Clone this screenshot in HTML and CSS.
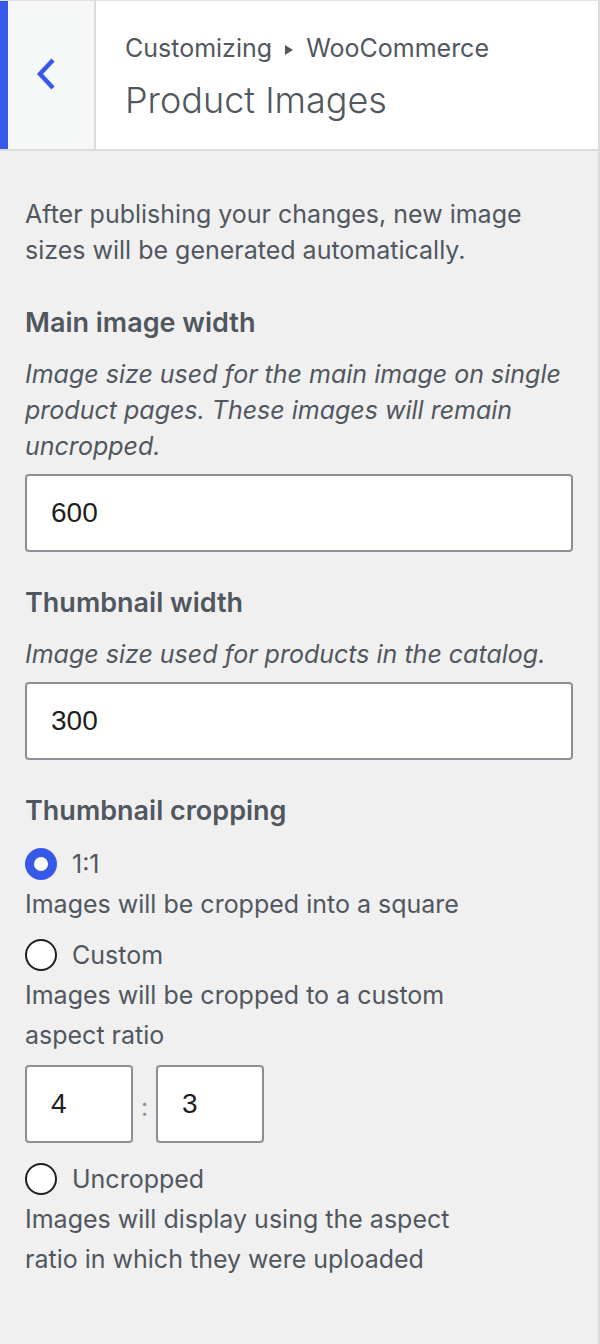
FILE: index.html
```html
<!DOCTYPE html>
<html lang="en">
<head>
    <meta charset="UTF-8">
    <meta name="viewport" content="width=device-width, initial-scale=1.0">
    <title>Product Images</title>
    <link rel="stylesheet" href="styles.css">
</head>
<body>
    <div class="panel">
        <div class="section-header">
            <button class="back-btn" aria-label="Back">
                <svg width="20" height="32" viewBox="0 0 20 32">
                    <path d="M17 2 L4 16 L17 30" fill="none" stroke="#3858e9" stroke-width="4.5"/>
                </svg>
            </button>
            <div class="section-title">
                <span class="breadcrumb">Customizing
                    <svg class="crumb-arrow" width="8" height="10" viewBox="0 0 8 10"><path d="M0 0 L8 5 L0 10 Z" fill="#50575e"/></svg>
                    WooCommerce</span>
                <h2>Product Images</h2>
            </div>
        </div>

        <div class="controls">
            <p class="intro">After publishing your changes, new image sizes will be generated automatically.</p>

            <div class="control">
                <span class="control-title">Main image width</span>
                <span class="description">Image size used for the main image on single product pages. These images will remain uncropped.</span>
                <input type="text" class="text-input" value="600">
            </div>

            <div class="control">
                <span class="control-title">Thumbnail width</span>
                <span class="description">Image size used for products in the catalog.</span>
                <input type="text" class="text-input" value="300">
            </div>

            <div class="control">
                <span class="control-title">Thumbnail cropping</span>
                <ul class="radio-list">
                    <li>
                        <label class="radio-row"><input type="radio" name="crop" checked> 1:1</label>
                        <p class="radio-desc">Images will be cropped into a square</p>
                    </li>
                    <li>
                        <label class="radio-row"><input type="radio" name="crop"> Custom</label>
                        <p class="radio-desc">Images will be cropped to a custom<br>aspect ratio</p>
                        <div class="ratio">
                            <input type="text" class="ratio-input" value="4">
                            <span class="ratio-sep">:</span>
                            <input type="text" class="ratio-input" value="3">
                        </div>
                    </li>
                    <li>
                        <label class="radio-row"><input type="radio" name="crop"> Uncropped</label>
                        <p class="radio-desc">Images will display using the aspect<br>ratio in which they were uploaded</p>
                    </li>
                </ul>
            </div>
        </div>
    </div>
</body>
</html>
```

FILE: styles.css
```css
body {
    font-family: Inter, "Noto Sans", sans-serif;
    margin: 0;
    padding: 0;
    background-color: #f0f0f1;
    color: #50575e;
}
.panel {
    min-height: 100vh;
    box-sizing: border-box;
    border-top: 1px solid #e0e0e0;
    border-right: 2px solid #dcdcde;
}
.section-header {
    display: flex;
    height: 148px;
    background-color: #fff;
    border-bottom: 2px solid #dcdcde;
}
.back-btn {
    width: 96px;
    flex-shrink: 0;
    margin: 0;
    border: 0;
    border-left: 8px solid #3858e9;
    border-right: 2px solid #dcdcde;
    background-color: #f6f7f7;
    display: flex;
    align-items: center;
    justify-content: flex-start;
    padding: 0 0 0 28px;
    box-sizing: border-box;
}
.back-btn svg {
    display: block;
    margin-bottom: 2px;
}
.section-title {
    padding: 28px 0 0 29px;
}
.breadcrumb {
    display: block;
    font-size: 25px;
    line-height: 38px;
}
.crumb-arrow {
    margin: 0 6px 2px 6px;
}
.section-title h2 {
    margin: 6px 0 0 0;
    font-size: 36px;
    font-weight: 300;
    line-height: 54px;
}
.controls {
    padding: 45px 25px 40px 25px;
}
.intro {
    margin: 0 0 37px 0;
    font-size: 25px;
    line-height: 36px;
}
.control {
    margin-bottom: 33px;
}
.control-title {
    display: block;
    font-size: 27px;
    font-weight: 600;
    line-height: 36px;
    margin-bottom: 15px;
}
.description {
    display: block;
    font-style: italic;
    font-size: 25px;
    line-height: 36px;
    margin-bottom: 10px;
}
.text-input {
    display: block;
    width: 100%;
    height: 78px;
    box-sizing: border-box;
    border: 2px solid #8c8f94;
    border-radius: 4px;
    background-color: #fff;
    padding: 0 24px;
    font-family: "Liberation Sans", Arial, sans-serif;
    font-size: 28px;
    color: #1e1e1e;
    margin: 0;
}
.radio-list {
    list-style-type: none;
    margin: 0;
    padding: 0;
}
.radio-list li {
    margin-bottom: 11px;
}
.radio-row {
    display: flex;
    align-items: center;
    gap: 15px;
    height: 40px;
    font-size: 25px;
}
.radio-row input {
    appearance: none;
    -webkit-appearance: none;
    width: 32px;
    height: 32px;
    margin: 0;
    border: 2px solid #1e1e1e;
    border-radius: 50%;
    background-color: #fff;
    box-sizing: border-box;
}
.radio-row input:checked {
    border: 9px solid #3858e9;
}
.radio-desc {
    margin: 0;
    font-size: 25px;
    line-height: 40px;
}
.ratio {
    display: flex;
    align-items: center;
    margin-top: 10px;
    margin-bottom: 16px;
}
.ratio-input {
    width: 108px;
    height: 78px;
    box-sizing: border-box;
    border: 2px solid #8c8f94;
    border-radius: 4px;
    background-color: #fff;
    padding: 0 24px;
    font-family: "Liberation Sans", Arial, sans-serif;
    font-size: 28px;
    color: #1e1e1e;
    margin: 0;
}
.ratio-sep {
    width: 23px;
    text-align: center;
    font-size: 25px;
    padding-top: 6px;
    color: #8c8f94;
}
```
